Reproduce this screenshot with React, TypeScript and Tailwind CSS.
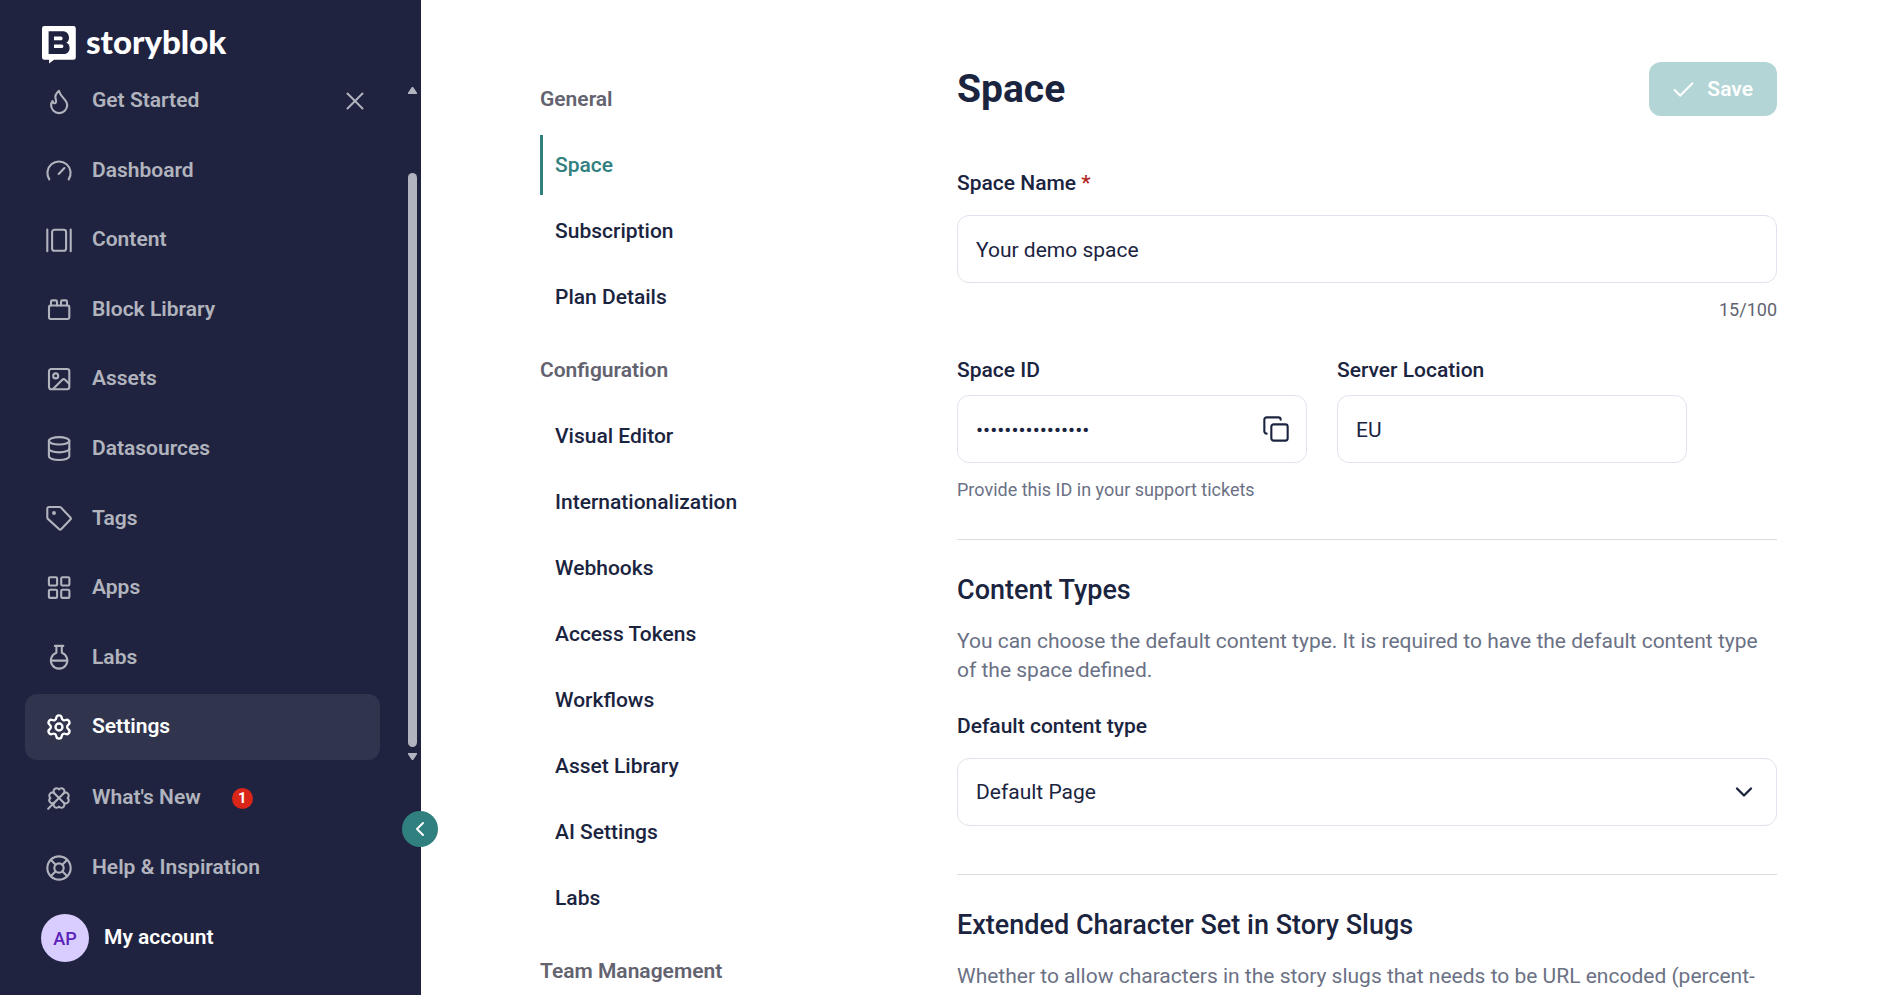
import React, { useState } from 'react';
import { ChevronDown, ChevronLeft, Clover, Copy, LifeBuoy, Settings, X } from 'lucide-react';
import clsx from 'clsx';

const Icon: React.FC<{ children: React.ReactNode }> = ({ children }) => (
  <svg
    viewBox="0 0 28 28"
    className="h-7 w-7 shrink-0"
    fill="none"
    stroke="currentColor"
    strokeWidth="2.1"
    strokeLinecap="round"
    strokeLinejoin="round"
    aria-hidden="true"
  >
    {children}
  </svg>
);

const FlameIcon = () => (
  <Icon>
    <path d="M14 3.9c-3.6 3-4.3 5.4-3.3 8.2.7 2 .6 3.7-.9 4.1-1.3.3-2-.7-2.2-2.2-1 1.3-1.5 2.6-1.5 4.1a8 8 0 0 0 16.1 0c0-5.8-6.8-7.6-8.2-14.2z" />
  </Icon>
);

const GaugeIcon = () => (
  <Icon>
    <path d="M4.3 22.4A11.6 11.6 0 1 1 23.7 22.4" />
    <path d="M13.7 16.9l5.7-5.9" />
  </Icon>
);

const ContentIcon = () => (
  <Icon>
    <path d="M2.3 3.6v21.6M25.7 3.6v21.6" />
    <rect x="7.1" y="3.8" width="14" height="21" rx="2.4" />
  </Icon>
);

const BlockIcon = () => (
  <Icon>
    <rect x="4" y="9.5" width="20.3" height="13.5" rx="1.4" />
    <path d="M6 9.5V5.7c0-.8.5-1.3 1.3-1.3h3.4c.8 0 1.3.5 1.3 1.3v3.8M16 9.5V5.7c0-.8.5-1.3 1.3-1.3h3.4c.8 0 1.3.5 1.3 1.3v3.8" />
  </Icon>
);

const ImageIcon = () => (
  <Icon>
    <rect x="4" y="4" width="20.3" height="20.3" rx="2.2" />
    <circle cx="10.7" cy="10.9" r="2.5" />
    <path d="M8 24l9.3-9.2c.9-.9 1.9-.9 2.8 0l4 4" />
  </Icon>
);

const DatabaseIcon = () => (
  <Icon>
    <ellipse cx="14.1" cy="5.8" rx="10.2" ry="3.7" />
    <path d="M3.9 5.8v15.5c0 2 4.6 3.7 10.2 3.7s10.200-1.700 10.200-3.700V5.800" />
    <path d="M3.9 13.7c0 2 4.6 3.7 10.2 3.7s10.200-1.700 10.200-3.700" />
  </Icon>
);

const TagIcon = () => (
  <Icon>
    <path d="M4 3h10.6c.5 0 1 .2 1.4.6l9.4 9.8c.6.7.6 1.5 0 2.100l-9.300 9.700c-.6.6-1.300.6-1.900 0L2.900 14.900a2 2 0 0 1-.6-1.400V4.700C2.300 3.600 2.900 3 4 3z" />
    <circle cx="9" cy="9" r="1.100" fill="currentColor" stroke="none" />
    <circle cx="9" cy="9" r=".9" />
  </Icon>
);

const AppsIcon = () => (
  <Icon>
    <rect x="3.9" y="3.3" width="8.2" height="8.2" rx="1.2" />
    <rect x="16.2" y="3.3" width="8.2" height="8.2" rx="1.2" />
    <rect x="3.9" y="15.7" width="8.2" height="8.2" rx="1.2" />
    <rect x="16.2" y="15.7" width="8.2" height="8.2" rx="1.2" />
  </Icon>
);

const FlaskIcon = () => (
  <Icon>
    <path d="M9.9 2.9h8.4M11.4 2.9v6.8a8.200 8.200 0 1 0 5.400 0V2.900M6 17.600h16.200" />
  </Icon>
);

const SpaceLogo = () => (
  <svg viewBox="0 0 34 38" className="h-[38px] w-[34px] shrink-0" aria-hidden="true">
    <path
      fill="#fff"
      fillRule="evenodd"
      d="M2.4 0h29a2.4 2.4 0 0 1 2.4 2.4v29a2.4 2.4 0 0 1-2.4 2.4H12L7.1 37.5V33.8H2.4A2.4 2.4 0 0 1 0 31.4v-29A2.4 2.4 0 0 1 2.4 0zM6.6 5.3v22.8h14.600c4 0 6.400-2.500 6.400-6.200 0-2.600-1.200-4.300-3.300-5.300 1.700-.9 2.700-2.500 2.700-4.700 0-4-2.500-6.600-6.400-6.600z"
    />
    <path
      fill="#fff"
      d="M12 10.6h6.800c1.100 0 1.800.8 1.800 1.800s-.7 1.800-1.800 1.800H12zM12 18.400h7.600c1.100 0 1.800.8 1.800 1.800s-.7 1.800-1.800 1.800H12z"
    />
  </svg>
);

const navItems = [
  { label: 'Get Started', icon: <FlameIcon />, closable: true },
  { label: 'Dashboard', icon: <GaugeIcon /> },
  { label: 'Content', icon: <ContentIcon /> },
  { label: 'Block Library', icon: <BlockIcon /> },
  { label: 'Assets', icon: <ImageIcon /> },
  { label: 'Datasources', icon: <DatabaseIcon /> },
  { label: 'Tags', icon: <TagIcon /> },
  { label: 'Apps', icon: <AppsIcon /> },
  { label: 'Labs', icon: <FlaskIcon /> },
  { label: 'Settings', icon: <Settings className="h-7 w-7 shrink-0" strokeWidth={2} />, active: true },
];

const settingsGroups = [
  { title: 'General', items: ['Space', 'Subscription', 'Plan Details'] },
  {
    title: 'Configuration',
    items: [
      'Visual Editor',
      'Internationalization',
      'Webhooks',
      'Access Tokens',
      'Workflows',
      'Asset Library',
      'AI Settings',
      'Labs',
    ],
  },
  { title: 'Team Management', items: [] },
];

const rowClass = 'flex h-[66px] items-center rounded-xl pl-5';
const fieldClass =
  'h-[68px] w-full appearance-none rounded-xl border border-[#dfe3ed] bg-white px-[18px] pt-[2px] text-[21px] text-[#1b243f] outline-none';
const labelClass = 'block text-[21px] leading-[27px] font-medium';

const Sidebar: React.FC = () => (
  <aside className="relative flex h-full w-[421px] shrink-0 flex-col bg-[#1f2340] text-[21px] font-semibold text-[#b1b3bd] antialiased">
    <div className="flex h-[68px] shrink-0 items-end gap-[10px] pb-1 pl-[42px] text-white">
      <SpaceLogo />
      <span className="pb-[6px] font-['Lato'] text-[33px] leading-[34px] font-black">storyblok</span>
    </div>

    <div className="flex min-h-0 flex-1">
      <nav className="ml-[25px] flex w-[355px] flex-col justify-between">
        {navItems.map(({ label, icon, active, closable }) => (
          <div key={label} className={clsx(rowClass, active && 'bg-[#30344d] text-white')}>
            <a href="#" className="flex flex-1 items-center gap-[19px]">
              {icon}
              {label}
            </a>
            {closable && (
              <button aria-label="Hide Get Started" className="mr-[10px]">
                <X className="h-[30px] w-[30px]" strokeWidth={1.6} />
              </button>
            )}
          </div>
        ))}
      </nav>

      {/* Scroll track of the menu */}
      <div className="mr-1 ml-auto flex w-[9px] flex-col pt-[19px] text-[#b1b4be]">
        <svg viewBox="0 0 9 7" className="h-[7px] w-[9px]" fill="currentColor" aria-hidden="true">
          <path d="M3.5.6a1.2 1.2 0 0 1 2 0L9 5.8V7H0V5.8z" />
        </svg>
        <div className="mt-[79px] mb-[6px] flex-1 rounded-full bg-[#b1b4be]" />
        <svg viewBox="0 0 9 7" className="h-[7px] w-[9px]" fill="currentColor" aria-hidden="true">
          <path d="M3.5 6.4a1.2 1.2 0 0 0 2 0L9 1.2V0H0v1.2z" />
        </svg>
      </div>
    </div>

    <div className="mx-[25px] mt-[5px] mb-6 flex flex-col gap-1">
      <a href="#" className={clsx(rowClass, 'gap-[19px]')}>
        <Clover className="h-7 w-7 shrink-0 p-px" strokeWidth={1.9} />
        What's New
        <span className="ml-3 flex h-[21px] w-[21px] items-center justify-center rounded-full bg-[#d92619] text-[15px] font-bold text-white">
          1
        </span>
      </a>
      <a href="#" className={clsx(rowClass, 'gap-[19px]')}>
        <LifeBuoy className="h-7 w-7 shrink-0" strokeWidth={1.8} />
        Help &amp; Inspiration
      </a>
      <a href="#" className="flex h-[66px] items-center gap-[15px] pl-4 text-white">
        <span className="flex h-12 w-12 items-center justify-center rounded-full bg-[#d9ccff] text-[18px] font-medium text-[#5a22b8]">
          AP
        </span>
        My account
      </a>
    </div>

    <button
      aria-label="Collapse menu"
      className="absolute -right-[17px] bottom-[148px] z-10 flex h-9 w-9 items-center justify-center rounded-full bg-[#2f807f] text-white"
    >
      <ChevronLeft className="h-6 w-6" strokeWidth={2} />
    </button>
  </aside>
);

const SettingsMenu: React.FC = () => {
  const [current, setCurrent] = useState('General/Space');

  return (
    <nav className="w-[417px] shrink-0 pt-[86px] text-[21px] leading-[27px] font-medium">
      {settingsGroups.map(group => (
        <section key={group.title} className="mb-[30px]">
          <h2 className="mb-[22px] font-semibold text-[#636370]">{group.title}</h2>
          <div className="flex flex-col gap-[6px]">
            {group.items.map(item => {
              const id = `${group.title}/${item}`;
              return (
                <a
                  key={id}
                  href="#"
                  onClick={() => setCurrent(id)}
                  className={clsx(
                    'flex h-[60px] items-center border-l-[3px] pl-3',
                    id === current ? 'border-[#2f807f] text-[#2f807f]' : 'border-transparent',
                  )}
                >
                  {item}
                </a>
              );
            })}
          </div>
        </section>
      ))}
    </nav>
  );
};

const SpaceForm: React.FC = () => {
  const [name, setName] = useState('Your demo space');

  return (
    <form className="min-w-0 flex-1 pt-[62px]" onSubmit={e => e.preventDefault()}>
      <div className="flex h-[54px] items-center justify-between">
        <h1 className="text-[39px] leading-[48px] font-bold">Space</h1>
        <button
          type="submit"
          className="flex h-[54px] items-center gap-[13px] rounded-xl bg-[#b4d5d6] px-6 pt-px text-[21px] font-semibold text-white antialiased"
        >
          <svg viewBox="0 0 21 16" className="h-4 w-[21px]" fill="none" stroke="currentColor" strokeWidth="2" aria-hidden="true">
            <path d="M1 7.5l6.2 6L20 .8" />
          </svg>
          Save
        </button>
      </div>

      <label htmlFor="space-name" className={clsx(labelClass, 'mt-[54px]')}>
        Space Name <span className="text-[#b3261e]">*</span>
      </label>
      <input
        id="space-name"
        className={clsx(fieldClass, 'mt-[18px]')}
        value={name}
        maxLength={100}
        onChange={e => setName(e.target.value)}
      />
      <p className="mt-[15px] text-right text-[18px] leading-6 text-[#636370]">{name.length}/100</p>

      <div className="mt-[35px] flex gap-[30px]">
        <div className="w-[350px]">
          <label htmlFor="space-id" className={labelClass}>
            Space ID
          </label>
          <div className="relative mt-[11px]">
            <input id="space-id" type="password" className={fieldClass} defaultValue="2853910046721853" readOnly />
            <button type="button" aria-label="Copy space ID" className="absolute top-5 right-[17px]">
              <Copy className="h-7 w-7" strokeWidth={1.8} />
            </button>
          </div>
          <p className="mt-[15px] text-[18px] leading-6 text-[#6b7185]">Provide this ID in your support tickets</p>
        </div>
        <div className="w-[350px]">
          <label htmlFor="server-location" className={labelClass}>
            Server Location
          </label>
          <input id="server-location" className={clsx(fieldClass, 'mt-[11px]')} defaultValue="EU" readOnly />
        </div>
      </div>

      <hr className="mt-[37px] border-[#dadce0]" />

      <h2 className="mt-[34px] text-[27px] leading-8 font-medium">Content Types</h2>
      <p className="mt-[21px] text-[21px] leading-[29px] text-[#6b7185]">
        You can choose the default content type. It is required to have the default content type of the space defined.
      </p>
      <label htmlFor="content-type" className={clsx(labelClass, 'mt-7')}>
        Default content type
      </label>
      <div className="relative mt-[18px]">
        <select id="content-type" className={fieldClass}>
          <option>Default Page</option>
        </select>
        <ChevronDown className="pointer-events-none absolute top-5 right-[19px] h-7 w-7" strokeWidth={2} />
      </div>

      <hr className="mt-12 border-[#dadce0]" />

      <h2 className="mt-[34px] text-[27px] leading-8 font-medium">Extended Character Set in Story Slugs</h2>
      <p className="mt-[21px] text-[21px] leading-[29px] text-[#6b7185]">
        Whether to allow characters in the story slugs that needs to be URL encoded (percent-
      </p>
    </form>
  );
};

const App: React.FC = () => {
  return (
    <div className="flex h-screen overflow-hidden bg-white font-['Roboto',sans-serif] text-[#1b243f]">
      <Sidebar />
      <main className="flex min-w-0 flex-1 overflow-y-auto pr-[116px] pl-[119px] [scrollbar-width:none]">
        <SettingsMenu />
        <SpaceForm />
      </main>
    </div>
  );
};

export default App;
